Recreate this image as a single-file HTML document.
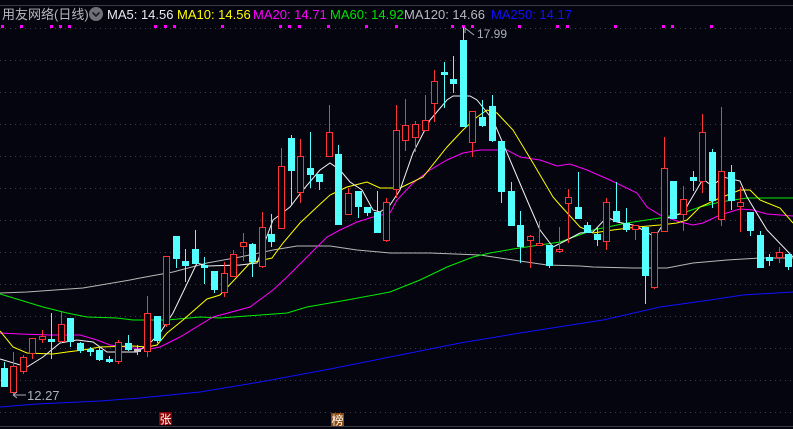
<!DOCTYPE html>
<html><head><meta charset="utf-8"><style>
html,body{margin:0;padding:0;background:#05050f;width:793px;height:429px;overflow:hidden}
svg{display:block}
text{font-family:"Liberation Sans","Noto Sans CJK SC",sans-serif}
</style></head><body>
<svg id="s" width="793" height="429" xmlns="http://www.w3.org/2000/svg">
<rect width="793" height="429" fill="#05050f"/>
<line x1="0" y1="5.5" x2="793" y2="5.5" stroke="#3a3a44"/>
<line x1="0" y1="426.5" x2="793" y2="426.5" stroke="#3a3a44"/>
<g id="grid" stroke="#3c3c46" stroke-dasharray="1 4"></g>
<g id="dots" fill="#ff00ff"></g>
<g id="ma" fill="none" stroke-width="1"></g>
<g id="c"></g>
<text x="2" y="19" font-size="13" fill="#b8b8c0">用友网络(日线)</text>
<circle cx="96" cy="14" r="7" fill="#707078"/>
<path d="M92.5 12.5 L96 16 L99.5 12.5" stroke="#1a1a20" stroke-width="1.6" fill="none"/>
<text x="107" y="19" font-size="13" fill="#e8e8f0">MA5: 14.56</text>
<text x="177" y="19" font-size="13" fill="#ffff00">MA10: 14.56</text>
<text x="253" y="19" font-size="13" fill="#ff00ff">MA20: 14.71</text>
<text x="330" y="19" font-size="13" fill="#00e000">MA60: 14.92</text>
<text x="404" y="19" font-size="13" fill="#b8b8c0">MA120: 14.66</text>
<text x="491" y="19" font-size="13" fill="#1010ff">MA250: 14.17</text>
<path d="M465 28 L465 33 M465 28 L474 35" stroke="#aab" fill="none"/>
<text x="477" y="38" font-size="12" fill="#aab0bc">17.99</text>
<path d="M13 395 L26 395 M13 395 L17 392 M13 395 L17 398" stroke="#aab" fill="none"/>
<text x="27" y="400" font-size="13" fill="#aab0bc">12.27</text>
<rect x="159" y="412" width="13" height="13" fill="#8b0000"/>
<text x="159.5" y="423.5" font-size="12" fill="#fff">张</text>
<rect x="331" y="413" width="13" height="13" fill="#8b4a10"/>
<text x="331.5" y="424.5" font-size="12" fill="#fff">榜</text>
</svg>
<script>
var NS="http://www.w3.org/2000/svg";
function el(p,t,a){var e=document.createElementNS(NS,t);for(var k in a)e.setAttribute(k,a[k]);p.appendChild(e);return e;}
var g=document.getElementById('grid');
[28,60,92,124,156,188,220,252,284,316,348,380,412].forEach(function(y){el(g,'line',{x1:0,y1:y+.5,x2:793,y2:y+.5});});
var d=document.getElementById('dots');
[2,21,51,60,69,155,165,174,222,280,289,299,328,366,396,452,463,472,519,557,567,615,663,672,711].forEach(function(x){el(d,'rect',{x:x-1,y:25,width:3,height:3});});
var ma=document.getElementById('ma');
function pl(c,pts){el(ma,'polyline',{points:pts,stroke:c});}
pl('#b8b8b8',"0,293 27,292 83,288 130,280 140,278 173,272 207,263 240,257 273,250 297,246 330,246 357,250 390,253 430,253 480,255 513,260 547,265 580,266 593,267 633,268 667,268 693,263 727,260 760,258 793,258");
pl('#1010ff',"0,407 37,404 100,401 140,398 200,392 260,382 330,369 400,355 460,343 520,333 603,320 660,307 710,300 743,295 793,292");
pl('#00ee00',"0,294 20,300 43,307 67,313 87,317 117,318 133,320 167,320 200,317 220,318 287,313 307,307 347,300 390,292 420,280 447,267 473,257 490,253 513,249 533,246 560,242 593,230 627,223 660,218 683,213 700,207 720,202 740,199 747,198 793,198");
pl('#ff00ff',"0,333 20,334 50,335 80,335 97,340 110,345 133,348 150,349 160,347 180,337 213,317 250,307 273,290 287,277 307,257 327,237 340,230 357,222 373,217 390,213 397,200 413,183 430,170 447,160 463,153 480,150 507,150 520,157 540,160 557,166 570,164 587,170 610,180 637,193 647,207 660,215 680,222 693,225 703,223 720,215 740,209 753,210 767,214 793,216");
pl('#ffff00',"0,331 13,347 27,353 53,354 67,352 83,350 100,347 133,346 147,347 157,345 167,333 183,320 207,299 220,295 237,277 250,263 263,260 272,258 283,243 300,223 317,207 330,195 347,187 367,182 380,188 400,188 423,177 447,147 463,130 477,117 487,110 497,113 513,130 533,163 553,197 560,205 580,227 593,233 613,230 637,227 660,225 677,223 687,220 700,207 720,198 740,190 750,190 760,200 780,208 793,223");
pl('#f4f4f4',"0,359 27,367 43,357 60,343 77,340 93,342 107,352 117,352 137,352 150,343 160,333 173,313 197,263 207,266 240,265 257,263 273,220 290,207 303,190 320,170 330,163 340,170 350,182 362,190 373,210 380,212 390,205 400,190 413,153 430,120 447,100 453,96 470,96 477,100 493,120 513,167 527,200 540,230 553,247 567,240 580,233 593,232 607,217 617,222 633,225 643,230 655,237 667,218 683,213 703,179 712,186 723,177 740,181 747,197 767,230 793,257");
// [type, bodyTop, bodyBot, high, low] ; type r=red hollow, c=cyan
var C=[
['c',368,386,362,386],['r',366,393,352,394],['r',357,372,355,374],['r',338,354,338,359],['r',336,340,330,343],
['c',339,341,313,359],['r',324,342,312,343],['c',318,341,318,347],['c',343,350,342,353],['c',349,351,347,356],
['c',350,359,346,361],['c',359,361,356,363],['r',342,362,340,364],['c',343,349,335,351],['g',349,351,345,355],
['r',313,352,296,357],['c',316,340,316,343],['r',256,325,256,327],['c',236,258,236,268],['c',261,265,249,282],
['c',249,263,230,263],['c',265,267,257,284],['c',271,289,271,293],['r',273,293,262,297],['r',254,277,250,277],
['r',242,247,233,261],['c',244,261,243,277],['r',227,267,212,268],['c',234,241,214,247],['r',166,229,148,229],
['c',138,170,135,206],['r',156,193,139,203],['c',168,174,132,188],['c',174,181,174,190],['r',132,157,105,157],
['c',154,224,145,225],['r',193,215,188,215],['c',191,206,191,218],['c',207,212,207,216],['c',212,232,191,232],
['r',202,241,198,242],['r',130,190,105,198],['r',125,141,99,151],['r',124,138,121,152],['r',120,131,95,131],
['r',81,104,70,122],['c',72,74,62,108],['c',79,83,56,93],['c',40,126,27,126],['r',111,143,111,157],
['c',117,125,100,127],['c',106,140,95,142],['c',141,191,141,203],['c',191,225,182,225],['c',225,246,211,263],
['r',236,241,235,268],['r',243,246,221,246],['c',245,265,245,268],['r',249,252,227,253],['r',197,204,189,243],
['c',207,218,172,218],['c',225,232,222,232],['c',234,239,227,246],['r',202,242,198,250],['c',211,221,182,221],
['c',223,229,208,232],['r',225,230,225,240],['c',227,275,227,304],['r',232,288,232,289],['r',168,232,137,232],
['c',181,218,181,218],['r',199,215,186,231],['c',177,180,171,191],['r',132,182,114,193],['c',152,200,149,208],
['r',171,220,107,226],['c',172,200,165,210],['r',202,207,187,232],['c',212,230,212,236],['c',235,267,231,268],
['c',257,260,254,266],['r',252,258,247,263],['c',254,266,254,270]];
var cg=document.getElementById('c');
C.forEach(function(k,i){
 var x=Math.round(3.5+9.57*i)+0.5;
 var col=k[0]=='r'?'#ff3535':(k[0]=='g'?'#c8c8c8':'#54ffff');
 var bh=Math.max(1,k[2]-k[1]);
 el(cg,'line',{x1:x,y1:k[3],x2:x,y2:k[4],stroke:col});
 if(k[0]=='r'){
   el(cg,'rect',{x:x-3,y:k[1]+.5,width:6,height:Math.max(1,bh-1),fill:'#05050f',stroke:col});
 }else{
   el(cg,'rect',{x:x-3.5,y:k[1],width:7,height:bh+1,fill:col});
 }
});
</script>
</body></html>
